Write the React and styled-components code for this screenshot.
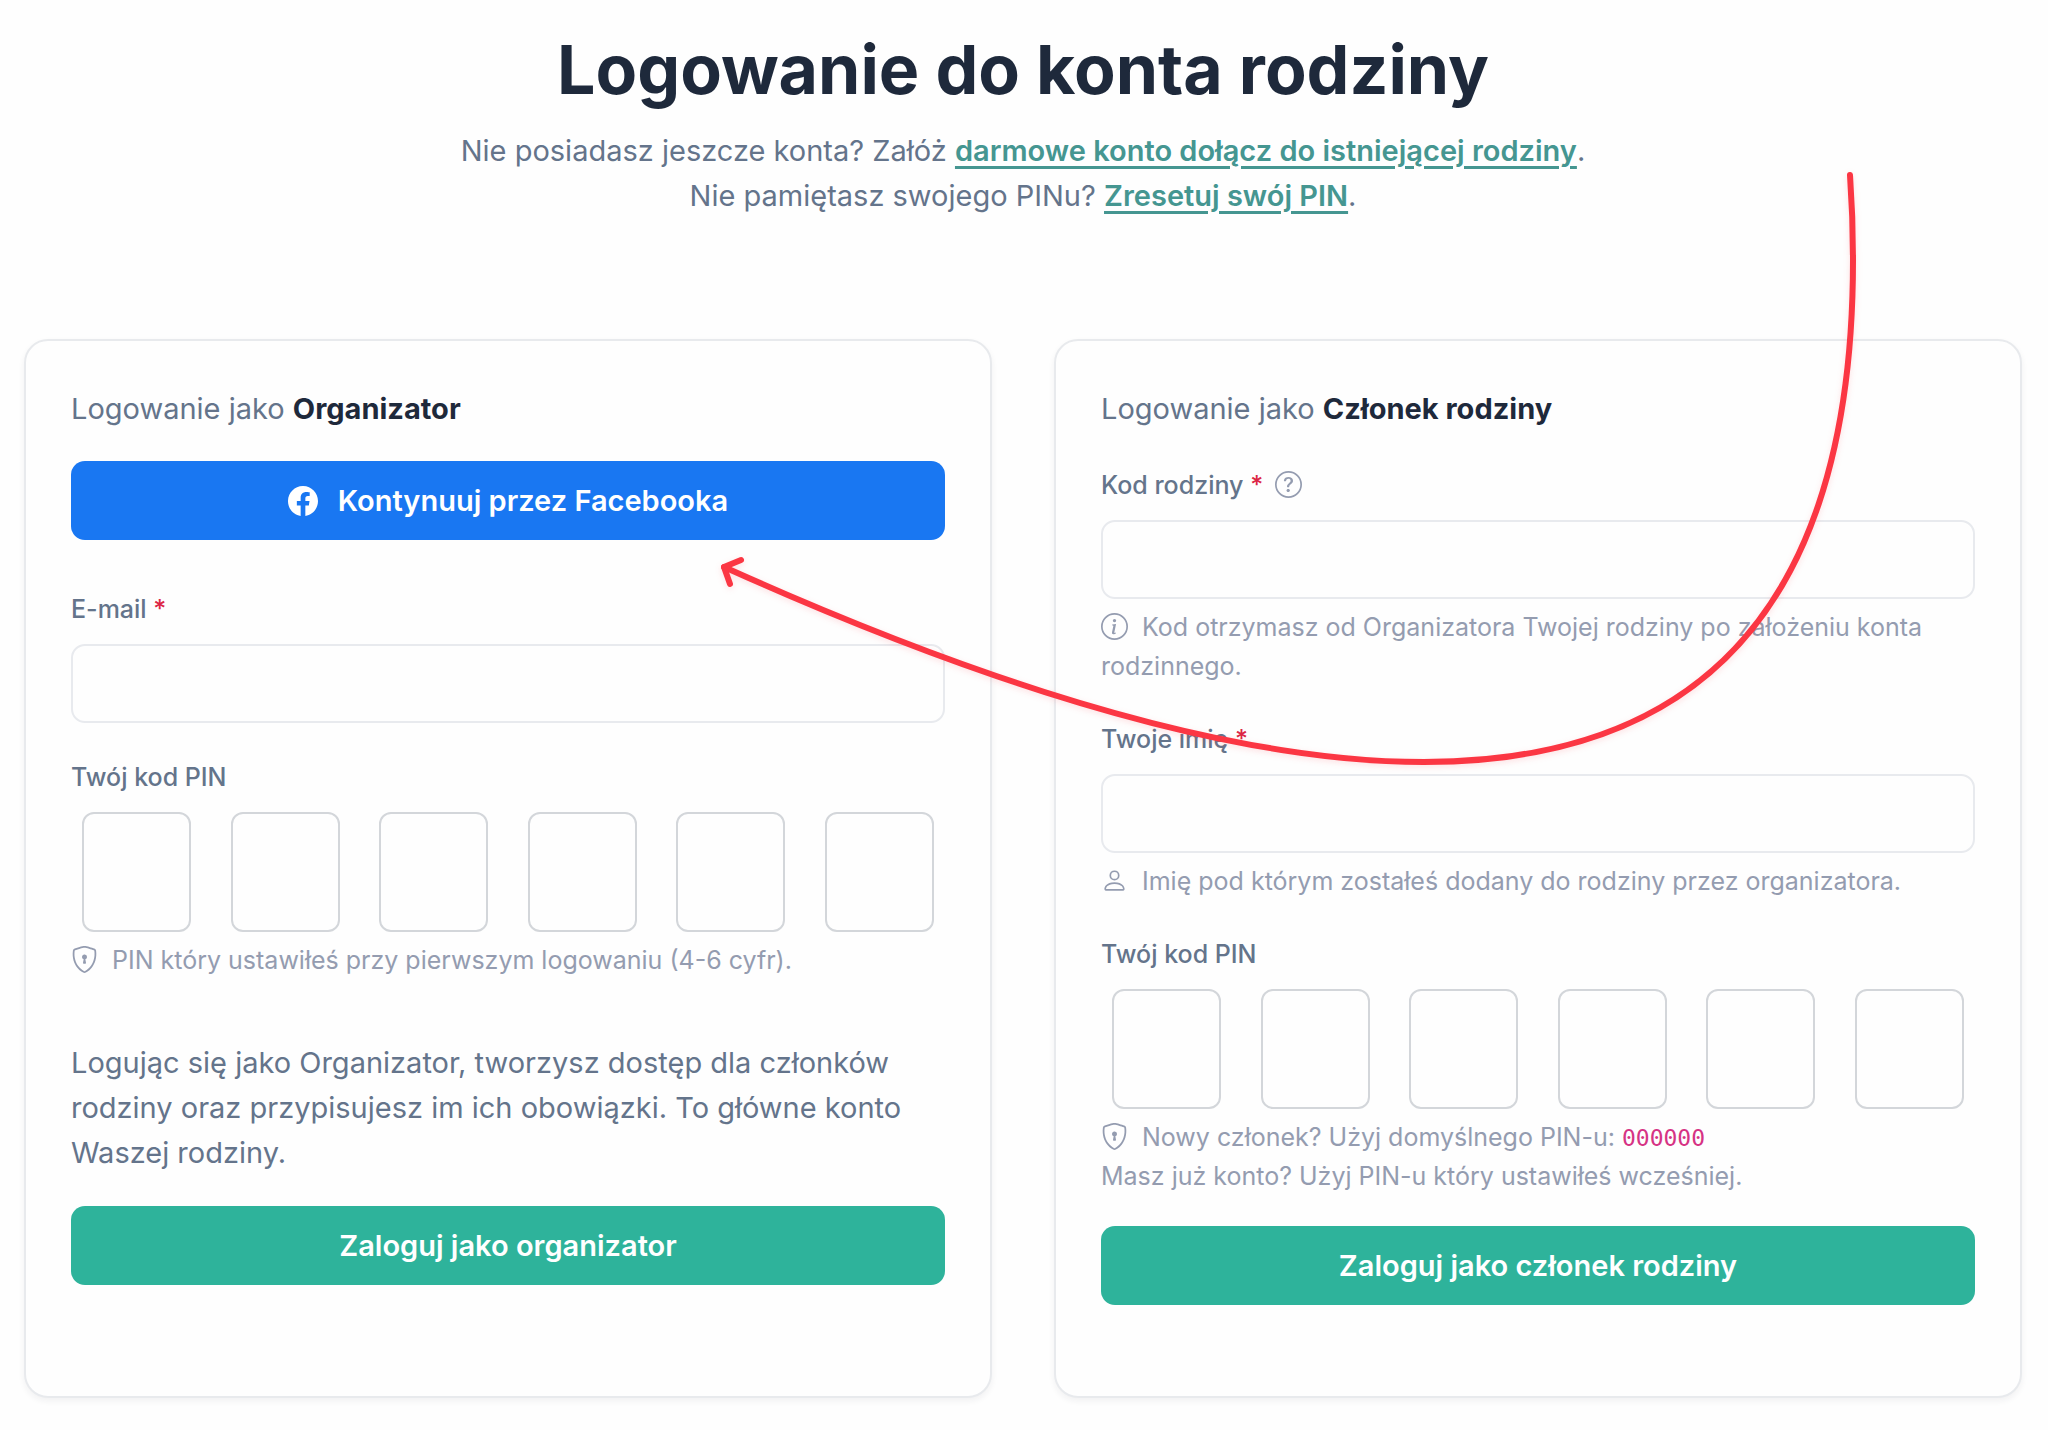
import styled, { createGlobalStyle } from "styled-components";
import {
  BsFacebook,
  BsInfoCircle,
  BsPerson,
  BsQuestionCircle,
  BsShieldLock,
} from "react-icons/bs";

const GlobalStyle = createGlobalStyle`
  * {
    box-sizing: border-box;
  }

  body {
    margin: 0;
    background-color: #fefefe;
    color: #64748b;
    font-family: Inter, "Liberation Sans", sans-serif;
    font-size: 29px;
    line-height: 45px;
  }
`;

const Page = styled.main`
  position: relative;
  padding: 24px 26px 32px 24px;
`;

const Header = styled.header`
  margin-bottom: 121px;
  text-align: center;
`;

const Title = styled.h1`
  margin: 0 0 14px;
  color: #1e293b;
  font-size: 68px;
  font-weight: 700;
  line-height: 90px;
`;

const Lead = styled.p`
  margin: 0;
`;

const TextLink = styled.a`
  color: #459691;
  font-weight: 600;
  text-decoration: underline;
  text-decoration-thickness: 3px;
  text-underline-offset: 5px;
`;

const Columns = styled.div`
  display: grid;
  grid-template-columns: 1fr 1fr;
  gap: 62px;
`;

const Card = styled.form`
  padding: 45px 45px 91px;
  border: 2px solid #e8eaed;
  border-radius: 24px;
  background-color: #fefefe;
  box-shadow: 0 3px 6px rgba(30, 41, 59, 0.06);
`;

const CardTitle = styled.h2`
  margin: 0 0 ${(props) => props.$gap}px;
  font-size: 29px;
  font-weight: 400;

  strong {
    color: #1e293b;
    font-weight: 700;
  }
`;

const Button = styled.button`
  display: flex;
  align-items: center;
  justify-content: center;
  gap: 20px;
  width: 100%;
  height: 79px;
  margin: 0 0 ${(props) => (props.$facebook ? 50 : 0)}px;
  padding: 0 30px;
  border: 0;
  border-radius: 14px;
  background-color: ${(props) => (props.$facebook ? "#1977f2" : "#2eb39b")};
  color: white;
  font: inherit;
  font-weight: 600;
  cursor: pointer;

  svg {
    font-size: 30px;
  }
`;

const Field = styled.div`
  margin-bottom: ${(props) => props.$gap}px;
`;

const Label = styled.label`
  display: block;
  margin-bottom: 15px;
  font-size: 25px;
  font-weight: 500;
  line-height: 39px;

  svg {
    margin-left: 5px;
    color: #949cb0;
    font-size: 27px;
    vertical-align: -4px;
  }
`;

const Required = styled.span`
  color: #dc2645;
`;

const Input = styled.input`
  display: block;
  width: 100%;
  height: 79px;
  padding: 0 24px;
  border: 2px solid #e8eaee;
  border-radius: 14px;
  background-color: #fefefe;
  color: #1e293b;
  font: inherit;
`;

const PinRow = styled.div`
  display: flex;
  justify-content: space-between;
  padding: 0 11px;
`;

const PinInput = styled.input`
  width: 109px;
  height: 120px;
  padding: 0;
  border: 2px solid #d3d6da;
  border-radius: 12px;
  background-color: #fefefe;
  color: #1e293b;
  font: inherit;
  text-align: center;
`;

const Hint = styled.p`
  margin: 9px 0 0;
  color: #949cb0;
  font-size: 25px;
  line-height: 39px;

  svg {
    margin-right: 14px;
    font-size: 27px;
    vertical-align: -4px;
  }
`;

const Code = styled.code`
  color: #d63384;
  font-family: "DejaVu Sans Mono", monospace;
  font-size: 23px;
  line-height: 1;
`;

const Note = styled.p`
  margin: 60px 0 31px;
`;

const Arrow = styled.svg`
  position: absolute;
  top: 0;
  left: 0;
  width: 100%;
  pointer-events: none;
  filter: drop-shadow(0 2px 3px rgba(251, 54, 64, 0.15));
`;

function Pin({ id }) {
  return (
    <div role="group" aria-labelledby={`${id}-label`}>
      <Label as="div" id={`${id}-label`}>
        Twój kod PIN
      </Label>
      <PinRow>
        {[1, 2, 3, 4, 5, 6].map((digit) => (
          <PinInput
            key={digit}
            type="password"
            inputMode="numeric"
            maxLength={1}
            autoComplete="off"
            aria-label={`Cyfra ${digit}`}
          />
        ))}
      </PinRow>
    </div>
  );
}

function App() {
  const onSubmit = (e) => e.preventDefault();

  return (
    <>
      <GlobalStyle />
      <Page>
        <Header>
          <Title>Logowanie do konta rodziny</Title>
          <Lead>
            Nie posiadasz jeszcze konta? Załóż{" "}
            <TextLink href="#rejestracja">
              darmowe konto dołącz do istniejącej rodziny
            </TextLink>
            .
          </Lead>
          <Lead>
            Nie pamiętasz swojego PINu?{" "}
            <TextLink href="#reset">Zresetuj swój PIN</TextLink>.
          </Lead>
        </Header>

        <Columns>
          {/* Organizator */}
          <Card onSubmit={onSubmit}>
            <CardTitle $gap={30}>
              Logowanie jako <strong>Organizator</strong>
            </CardTitle>
            <Button type="button" $facebook>
              <BsFacebook aria-hidden="true" />
              Kontynuuj przez Facebooka
            </Button>
            <Field $gap={35}>
              <Label htmlFor="email">
                E-mail <Required>*</Required>
              </Label>
              <Input id="email" type="email" />
            </Field>
            <Pin id="organizer-pin" />
            <Hint>
              <BsShieldLock aria-hidden="true" />
              PIN który ustawiłeś przy pierwszym logowaniu (4-6 cyfr).
            </Hint>
            <Note>
              Logując się jako Organizator, tworzysz dostęp dla członków rodziny
              oraz przypisujesz im ich obowiązki. To główne konto Waszej
              rodziny.
            </Note>
            <Button type="submit">Zaloguj jako organizator</Button>
          </Card>

          {/* Członek rodziny */}
          <Card onSubmit={onSubmit}>
            <CardTitle $gap={35}>
              Logowanie jako <strong>Członek rodziny</strong>
            </CardTitle>
            <Field $gap={34}>
              <Label htmlFor="family-code">
                Kod rodziny <Required>*</Required>{" "}
                <BsQuestionCircle aria-hidden="true" />
              </Label>
              <Input id="family-code" type="text" />
              <Hint>
                <BsInfoCircle aria-hidden="true" />
                Kod otrzymasz od Organizatora Twojej rodziny po założeniu konta
                rodzinnego.
              </Hint>
            </Field>
            <Field $gap={34}>
              <Label htmlFor="first-name">
                Twoje imię <Required>*</Required>
              </Label>
              <Input id="first-name" type="text" />
              <Hint>
                <BsPerson aria-hidden="true" />
                Imię pod którym zostałeś dodany do rodziny przez organizatora.
              </Hint>
            </Field>
            <Field $gap={30}>
              <Pin id="member-pin" />
              <Hint>
                <BsShieldLock aria-hidden="true" />
                Nowy członek? Użyj domyślnego PIN-u: <Code>000000</Code>
                <br />
                Masz już konto? Użyj PIN-u który ustawiłeś wcześniej.
              </Hint>
            </Field>
            <Button type="submit">Zaloguj jako członek rodziny</Button>
          </Card>
        </Columns>

        <Arrow
          viewBox="0 0 2048 1430"
          fill="none"
          stroke="#fb3643"
          strokeWidth="6"
          strokeLinecap="round"
          strokeLinejoin="round"
          aria-hidden="true"
        >
          <path d="M1850 175C1852 203 1853 230 1853 260C1853 595 1710 762 1424 762C1200 762 924 657 724 567" />
          <path d="M741 560L724 567L730 584" />
        </Arrow>
      </Page>
    </>
  );
}

export default App;
